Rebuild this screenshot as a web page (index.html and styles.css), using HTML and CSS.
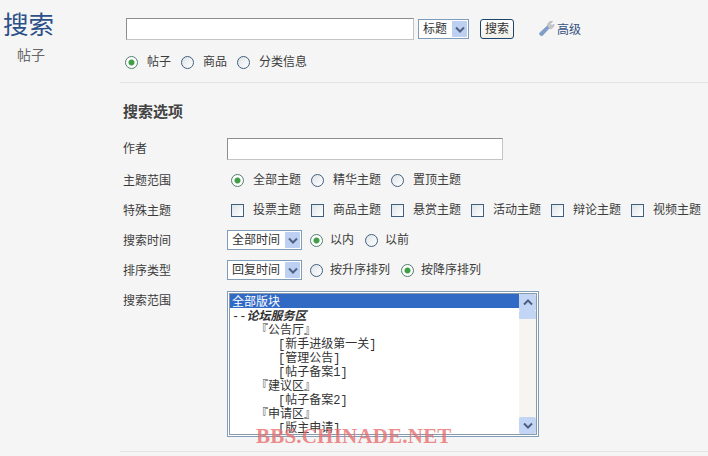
FILE: index.html
```html
<!DOCTYPE html>
<html lang="zh-CN">
<head>
    <meta charset="UTF-8">
    <title>搜索</title>
    <link rel="stylesheet" href="styles.css">
</head>
<body>
    <div class="page">
        <div class="side">
            <h1 class="side-title">搜索</h1>
            <div class="side-sub">帖子</div>
        </div>
        <div class="main">
            <div class="search-head">
                <div class="search-bar">
                    <input class="text-input keyword" type="text">
                    <div class="select select-title">标题
                        <span class="select-arrow"><svg width="10" height="7" viewBox="0 0 10 7"><path d="M1 1.5 L5 5.5 L9 1.5" fill="none" stroke="#4d6185" stroke-width="2"/></svg></span>
                    </div>
                    <button class="search-btn">搜索</button>
                    <a class="advanced">
                        <svg width="18" height="19" viewBox="0 0 19 19"><path d="M2 14 L10 6.5 L11.5 9.5 L5 16.5 C3.5 18 0.5 16 2 14 Z" fill="#7f9fd0" stroke="#7f93b5" stroke-width="0.7"/><path d="M10 6.5 C10 3.5 12.5 1.5 15.5 2 L13 4.5 L14.5 6.5 L17 5 C17 8 14.5 10.5 11.5 9.5 Z" fill="#c4c8cc" stroke="#9aa0a6" stroke-width="0.5"/></svg>
                        高级
                    </a>
                </div>
                <div class="option-row type-row">
                    <label class="option"><input type="radio" name="type" checked>帖子</label>
                    <label class="option"><input type="radio" name="type">商品</label>
                    <label class="option"><input type="radio" name="type">分类信息</label>
                </div>
            </div>

            <div class="options">
                <h2 class="options-title">搜索选项</h2>
                <div class="form-row author-row">
                    <div class="form-label">作者</div>
                    <input class="text-input author" type="text">
                </div>
                <div class="form-row">
                    <div class="form-label">主题范围</div>
                    <div class="option-row inset">
                        <label class="option"><input type="radio" name="scope" checked>全部主题</label>
                        <label class="option"><input type="radio" name="scope">精华主题</label>
                        <label class="option"><input type="radio" name="scope">置顶主题</label>
                    </div>
                </div>
                <div class="form-row">
                    <div class="form-label">特殊主题</div>
                    <div class="option-row inset">
                        <label class="option"><input type="checkbox">投票主题</label>
                        <label class="option"><input type="checkbox">商品主题</label>
                        <label class="option"><input type="checkbox">悬赏主题</label>
                        <label class="option"><input type="checkbox">活动主题</label>
                        <label class="option"><input type="checkbox">辩论主题</label>
                        <label class="option"><input type="checkbox">视频主题</label>
                    </div>
                </div>
                <div class="form-row">
                    <div class="form-label">搜索时间</div>
                    <div class="select select-wide">全部时间
                        <span class="select-arrow"><svg width="10" height="7" viewBox="0 0 10 7"><path d="M1 1.5 L5 5.5 L9 1.5" fill="none" stroke="#4d6185" stroke-width="2"/></svg></span>
                    </div>
                    <div class="option-row after-select">
                        <label class="option"><input type="radio" name="when" checked>以内</label>
                        <label class="option"><input type="radio" name="when">以前</label>
                    </div>
                </div>
                <div class="form-row">
                    <div class="form-label">排序类型</div>
                    <div class="select select-wide">回复时间
                        <span class="select-arrow"><svg width="10" height="7" viewBox="0 0 10 7"><path d="M1 1.5 L5 5.5 L9 1.5" fill="none" stroke="#4d6185" stroke-width="2"/></svg></span>
                    </div>
                    <div class="option-row after-select">
                        <label class="option"><input type="radio" name="order">按升序排列</label>
                        <label class="option"><input type="radio" name="order" checked>按降序排列</label>
                    </div>
                </div>
                <div class="form-row forum-row">
                    <div class="form-label">搜索范围</div>
                    <div class="listbox">
                        <div class="list-items">
                            <div class="list-item selected">全部版块</div>
                            <div class="list-item group">--<b>论坛服务区</b></div>
                            <div class="list-item level-1">『公告厅』</div>
                            <div class="list-item level-2">[新手进级第一关]</div>
                            <div class="list-item level-2">[管理公告]</div>
                            <div class="list-item level-2">[帖子备案1]</div>
                            <div class="list-item level-1">『建议区』</div>
                            <div class="list-item level-2">[帖子备案2]</div>
                            <div class="list-item level-1">『申请区』</div>
                            <div class="list-item level-2">[版主申请]</div>
                        </div>
                        <div class="scrollbar">
                            <span class="scroll-btn"><svg width="10" height="7" viewBox="0 0 10 7"><path d="M1 5.5 L5 1.5 L9 5.5" fill="none" stroke="#4d6185" stroke-width="2"/></svg></span>
                            <span class="scroll-thumb"></span>
                            <span class="scroll-space"></span>
                            <span class="scroll-btn"><svg width="10" height="7" viewBox="0 0 10 7"><path d="M1 1.5 L5 5.5 L9 1.5" fill="none" stroke="#4d6185" stroke-width="2"/></svg></span>
                        </div>
                    </div>
                </div>
            </div>
        </div>
    </div>
    <div class="page-rule"></div>
    <div class="watermark">BBS.CHINADE.NET</div>
</body>
</html>
```

FILE: styles.css
```css
* {
    margin: 0;
    padding: 0;
    box-sizing: border-box;
}

html, body {
    height: 456px;
    overflow: hidden;
}

body {
    position: relative;
    background: #f5f5f5;
    color: #3c3c3c;
    font-family: "Liberation Sans", "Noto Sans CJK SC", sans-serif;
    font-size: 12px;
}

.page {
    display: flex;
}

.side {
    width: 120px;
    flex-shrink: 0;
    padding: 9px 0 0 3px;
}

.side-title {
    font-size: 25.5px;
    line-height: 32px;
    font-weight: 400;
    color: #2c5088;
}

.side-sub {
    margin: 5px 0 0 14px;
    font-size: 14px;
    line-height: 18px;
    color: #666;
}

.main {
    flex: 1;
}

.search-head {
    height: 83px;
    padding: 18px 0 0 5px;
    border-bottom: 1px solid #e4e4e4;
}

.search-bar {
    display: flex;
    align-items: center;
    height: 22px;
}

.text-input {
    height: 22px;
    background: #fff;
    border: 1px solid #c4c4c4;
    border-top-color: #8e8e8e;
    border-left-color: #8e8e8e;
}

.keyword {
    width: 288px;
    margin-left: 1px;
}

.select {
    position: relative;
    height: 20px;
    padding-left: 4px;
    background: #fff;
    border: 1px solid #7f9db9;
    color: #333;
    line-height: 19px;
    white-space: nowrap;
}

.select-title {
    width: 51px;
    margin-left: 4px;
}

.select-wide {
    width: 75px;
    flex-shrink: 0;
}

.select-arrow {
    position: absolute;
    top: 1px;
    right: 1px;
    bottom: 1px;
    width: 15px;
    display: flex;
    align-items: center;
    justify-content: center;
    background: #bdd0f2;
    border-radius: 1px;
}

.search-btn {
    width: 34px;
    height: 20px;
    margin-left: 11px;
    background: linear-gradient(#fff, #f1efe6);
    border: 1px solid #1f4468;
    border-radius: 3px;
    color: #333;
    font: inherit;
    line-height: 18px;
}

.advanced {
    display: flex;
    align-items: center;
    gap: 1px;
    margin: 0 0 2px 24px;
    color: #34527f;
}

.option-row {
    display: flex;
    align-items: center;
}

.type-row {
    height: 20px;
    margin-top: 12px;
}

.option {
    display: flex;
    align-items: center;
    margin-right: 10px;
    line-height: 16px;
    white-space: nowrap;
}

.option input {
    appearance: none;
    width: 13px;
    height: 13px;
    margin-right: 9px;
    flex-shrink: 0;
    background: linear-gradient(135deg, #dfe3e6, #fff);
    border: 1px solid #3f5f7f;
}

.option input[type="radio"] {
    border-radius: 50%;
}

.option input[type="radio"]:checked {
    background: radial-gradient(circle, #3f9f45 0 2.5px, #fff 3.5px);
    border-color: #4f7f6f;
}

.options {
    padding: 20px 0 0 3px;
}

.options-title {
    font-size: 15px;
    line-height: 18px;
    font-weight: 700;
    color: #444;
}

.form-row {
    display: flex;
    align-items: center;
    height: 30px;
}

.form-label {
    width: 104px;
    margin-bottom: 2px;
    flex-shrink: 0;
}

.author-row {
    height: 22px;
    margin: 17px 0 5px;
}

.author-row .form-label {
    margin-bottom: 4px;
}

.author {
    width: 276px;
}

.inset {
    padding-left: 4px;
}

.after-select {
    margin-left: 8px;
}

.after-select .option input {
    margin-right: 7px;
}

.after-select .option {
    margin-right: 11px;
}

.forum-row {
    align-items: flex-start;
    height: auto;
    padding-top: 6px;
}

.listbox {
    display: flex;
    width: 312px;
    height: 146px;
    padding: 2px;
    background: #fff;
    border: 1px solid #7f9db9;
    box-shadow: inset 0 0 0 1px #fff, inset 0 0 0 2px #8a9aa8;
}

.list-items {
    flex: 1;
    overflow: hidden;
    color: #333;
    font-family: "Liberation Mono", "Noto Sans CJK SC", monospace;
    line-height: 18px;
}

.list-item {
    height: 14px;
    padding-left: 2px;
    white-space: nowrap;
}

.selected {
    background: #316ac5;
    color: #fff;
}

.group {
    padding-left: 2px;
}

.group b {
    font-style: italic;
    font-weight: 700;
}

.level-1 {
    padding-left: 26px;
}

.level-2 {
    padding-left: 48px;
}

.scrollbar {
    display: flex;
    flex-direction: column;
    width: 17px;
    background: #f6f5f1;
}

.scroll-btn {
    display: flex;
    align-items: center;
    justify-content: center;
    height: 17px;
    background: #c3d5f5;
    border-radius: 2px;
}

.scroll-thumb {
    height: 8px;
    background: #c3d5f5;
    border-radius: 1px;
}

.scroll-space {
    flex: 1;
}

.page-rule {
    position: absolute;
    left: 120px;
    right: 0;
    top: 451px;
    border-top: 1px solid #e4e4e4;
}

.watermark {
    position: absolute;
    left: 256px;
    top: 425px;
    font-family: "Liberation Serif", serif;
    font-size: 21px;
    line-height: 23px;
    letter-spacing: 0.2px;
    font-weight: 700;
    color: rgba(232, 110, 110, 0.8);
    white-space: nowrap;
}
```
